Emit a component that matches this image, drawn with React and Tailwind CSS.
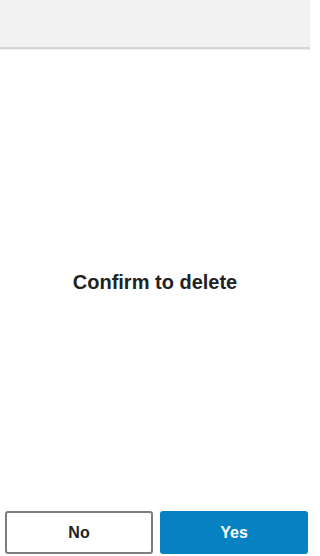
import React from 'react';

export default function App() {
  const handleNo = () => {};
  const handleYes = () => {};

  return (
    <div
      className="flex h-[556px] w-[310px] flex-col bg-white text-[#222]"
      style={{ fontFamily: '"Liberation Sans", Arial, sans-serif' }}
    >
      <div className="h-[49px] shrink-0 border-b-2 border-[#d6d6d6] bg-[#f2f2f2] shadow-[0_1px_1px_rgba(0,0,0,0.06)]" />

      <div className="flex flex-1 items-center justify-center pt-[4px]">
        <h1 className="text-[20px] font-bold">Confirm to delete</h1>
      </div>

      <div className="flex gap-[7px] pb-[2px] pl-[5px]">
        <button
          className="h-[43px] w-[148px] rounded-[3px] border-2 border-[#7d7d7d] bg-white text-[16px] font-bold text-[#222]"
          onClick={handleNo}
        >
          No
        </button>
        <button
          className="h-[43px] w-[148px] rounded-[3px] bg-[#0681c2] text-[16px] font-bold text-white"
          onClick={handleYes}
        >
          Yes
        </button>
      </div>
    </div>
  );
}
